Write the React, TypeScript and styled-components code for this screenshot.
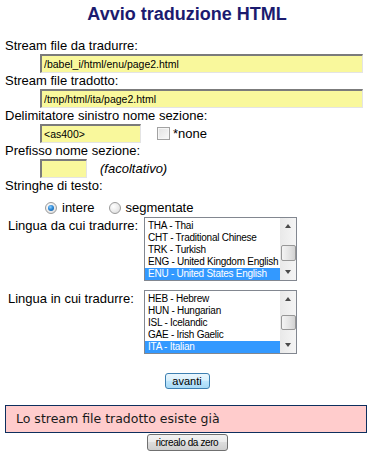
import styled, { createGlobalStyle } from 'styled-components';

const GlobalStyle = createGlobalStyle`
  html, body {
    margin: 0;
    padding: 0;
    background: #ffffff;
  }
  body {
    font-family: "Liberation Sans", Arial, sans-serif;
    font-size: 13px;
    color: #000000;
  }
`;

const Page = styled.div`
  width: 374px;
  box-sizing: border-box;
  padding: 4px 5px 0 5px;
  display: flex;
  flex-direction: column;
`;

const Title = styled.h1`
  margin: 0 0 13px;
  font-size: 18px;
  line-height: 21px;
  font-weight: bold;
  color: #1b1b6f;
  text-align: center;
`;

const Label = styled.div`
  height: 16px;
  line-height: 16px;
`;

const FieldRow = styled.div<{ $gap?: number }>`
  display: flex;
  align-items: center;
  gap: ${(p) => p.$gap ?? 0}px;
  padding-left: 35px;
`;

const TextField = styled.input<{ $width: number }>`
  width: ${(p) => p.$width}px;
  height: 19px;
  box-sizing: border-box;
  margin: 0;
  padding: 0 2px;
  background: #f9f89c;
  border-top: 2px solid #7b7b7b;
  border-left: 2px solid #7b7b7b;
  border-right: 1px solid #e4e4e4;
  border-bottom: 1px solid #e4e4e4;
  font-family: "Liberation Sans", Arial, sans-serif;
  font-size: 10.5px;
  color: #000;
  outline: none;
`;

const CheckWrap = styled.label`
  display: flex;
  align-items: center;
  gap: 3px;
`;

const CheckBox = styled.span`
  display: inline-block;
  width: 13px;
  height: 13px;
  box-sizing: border-box;
  border: 1px solid #a2a2a2;
  background: linear-gradient(135deg, #e2e2e2 0%, #f9f9f9 100%);
  box-shadow: inset 0 0 0 1px #f6f6f6;
`;

const Hint = styled.span`
  font-style: italic;
`;

const RadioRow = styled.div`
  display: flex;
  align-items: center;
  padding: 4px 0 0 40px;
  height: 19px;
`;

const RadioOption = styled.label`
  display: flex;
  align-items: center;
  gap: 5px;
  margin-right: 14px;
`;

const Radio = styled.span<{ $checked?: boolean }>`
  position: relative;
  display: inline-block;
  width: 12px;
  height: 12px;
  box-sizing: border-box;
  border-radius: 50%;
  border: 1px solid #9a9a9a;
  background: radial-gradient(circle at 35% 35%, #ffffff 0%, #e8e8e8 60%, #d4d4d4 100%);

  &::after {
    content: '';
    display: ${(p) => (p.$checked ? 'block' : 'none')};
    position: absolute;
    left: 2px;
    top: 2px;
    width: 6px;
    height: 6px;
    border-radius: 50%;
    background: radial-gradient(circle at 40% 35%, #8fd0ff 0%, #2e8ad8 45%, #0c4f94 100%);
  }
`;

const LangRow = styled.div<{ $top: number }>`
  display: flex;
  align-items: flex-start;
  margin-top: ${(p) => p.$top}px;
  padding-left: 3px;
`;

const LangLabel = styled.div`
  width: 136px;
  line-height: 15px;
  padding-top: 1px;
`;

const ListBox = styled.div`
  width: 153px;
  height: 64px;
  box-sizing: border-box;
  border: 1px solid #828790;
  background: #ffffff;
  display: flex;
`;

const Options = styled.div`
  flex: 1;
  padding-top: 2px;
  overflow: hidden;
`;

const Option = styled.div<{ $selected?: boolean }>`
  height: 12px;
  line-height: 12px;
  padding-left: 3px;
  white-space: nowrap;
  font-family: "Liberation Sans", Arial, sans-serif;
  font-size: 10px;
  letter-spacing: -0.25px;
  background: ${(p) => (p.$selected ? '#3399ff' : 'transparent')};
  color: ${(p) => (p.$selected ? '#ffffff' : '#000000')};
`;

const ScrollBar = styled.div`
  width: 16px;
  display: flex;
  flex-direction: column;
  align-items: center;
  background: linear-gradient(to right, #e9e9e9, #f5f5f5);
`;

const ArrowBtn = styled.div<{ $down?: boolean }>`
  width: 16px;
  height: 16px;
  display: flex;
  align-items: center;
  justify-content: center;
  margin-top: ${(p) => (p.$down ? 'auto' : '0')};

  &::before {
    content: '';
    width: 0;
    height: 0;
    border-left: 3.5px solid transparent;
    border-right: 3.5px solid transparent;
    ${(p) => (p.$down ? 'border-top: 4px solid #4a4a4a;' : 'border-bottom: 4px solid #4a4a4a;')}
  }
`;

const Thumb = styled.div<{ $offset: number; $size: number }>`
  width: 15px;
  height: ${(p) => p.$size}px;
  margin-top: ${(p) => p.$offset}px;
  box-sizing: border-box;
  border: 1px solid #979797;
  border-radius: 2px;
  background: linear-gradient(to right, #f4f4f4, #e2e2e2 60%, #d2d2d2);
`;

const Centered = styled.div<{ $top: number }>`
  display: flex;
  justify-content: center;
  margin-top: ${(p) => p.$top}px;
`;

const Button = styled.button<{ $variant: 'blue' | 'gray' }>`
  margin: 0;
  padding: 0;
  box-sizing: border-box;
  border-radius: 3px;
  cursor: pointer;
  color: #000;
  font-family: "Liberation Sans", Arial, sans-serif;
  ${(p) =>
    p.$variant === 'blue'
      ? `
    width: 45px;
    height: 16px;
    line-height: 13px;
    border: 1px solid #3c7fb1;
    background: linear-gradient(to bottom, #eaf6fd 0%, #d9f0fc 45%, #bee6fd 50%, #a7d9f5 100%);
    font-size: 11px;
  `
      : `
    width: 81px;
    height: 17px;
    line-height: 14px;
    border: 1px solid #707070;
    background: linear-gradient(to bottom, #f2f2f2 0%, #ebebeb 45%, #dddddd 50%, #cfcfcf 100%);
    font-size: 10px;
    letter-spacing: -0.4px;
  `}
`;

const ErrorBox = styled.div`
  width: 362px;
  height: 28px;
  box-sizing: border-box;
  margin-top: 16px;
  padding-left: 10px;
  border: 1px solid #0d2f5e;
  background: #ffcccc;
  font-family: "DejaVu Sans", Verdana, sans-serif;
  font-size: 12.5px;
  line-height: 26px;
  color: #1a1a1a;
`;

type Lang = { code: string; name: string };

const sourceLangs: Lang[] = [
  { code: 'THA', name: 'Thai' },
  { code: 'CHT', name: 'Traditional Chinese' },
  { code: 'TRK', name: 'Turkish' },
  { code: 'ENG', name: 'United Kingdom English' },
  { code: 'ENU', name: 'United States English' },
];

const targetLangs: Lang[] = [
  { code: 'HEB', name: 'Hebrew' },
  { code: 'HUN', name: 'Hungarian' },
  { code: 'ISL', name: 'Icelandic' },
  { code: 'GAE', name: 'Irish Gaelic' },
  { code: 'ITA', name: 'Italian' },
];

const LangList = ({ items, selected, thumbTop, thumbSize }: { items: Lang[]; selected: string; thumbTop: number; thumbSize: number }) => (
  <ListBox>
    <Options>
      {items.map((l) => (
        <Option key={l.code} $selected={l.code === selected}>
          {l.code} - {l.name}
        </Option>
      ))}
    </Options>
    <ScrollBar>
      <ArrowBtn />
      <Thumb $offset={thumbTop} $size={thumbSize} />
      <ArrowBtn $down />
    </ScrollBar>
  </ListBox>
);

export default function App() {
  return (
    <>
      <GlobalStyle />
      <Page>
        <Title>Avvio traduzione HTML</Title>

        <Label>Stream file da tradurre:</Label>
        <FieldRow>
          <TextField $width={323} readOnly value="/babel_i/html/enu/page2.html" />
        </FieldRow>

        <Label>Stream file tradotto:</Label>
        <FieldRow>
          <TextField $width={323} readOnly value="/tmp/html/ita/page2.html" />
        </FieldRow>

        <Label>Delimitatore sinistro nome sezione:</Label>
        <FieldRow $gap={16}>
          <TextField $width={101} readOnly value="<as400>" />
          <CheckWrap>
            <CheckBox />
            <span>*none</span>
          </CheckWrap>
        </FieldRow>

        <Label>Prefisso nome sezione:</Label>
        <FieldRow $gap={13}>
          <TextField $width={47} readOnly value="" />
          <Hint>(facoltativo)</Hint>
        </FieldRow>

        <Label>Stringhe di testo:</Label>
        <RadioRow>
          <RadioOption>
            <Radio $checked />
            <span>intere</span>
          </RadioOption>
          <RadioOption>
            <Radio />
            <span>segmentate</span>
          </RadioOption>
        </RadioRow>

        <LangRow $top={0}>
          <LangLabel>Lingua da cui tradurre:</LangLabel>
          <LangList items={sourceLangs} selected="ENU" thumbTop={11} thumbSize={16} />
        </LangRow>

        <LangRow $top={9}>
          <LangLabel>Lingua in cui tradurre:</LangLabel>
          <LangList items={targetLangs} selected="ITA" thumbTop={8} thumbSize={15} />
        </LangRow>

        <Centered $top={19}>
          <Button $variant="blue">avanti</Button>
        </Centered>

        <ErrorBox>Lo stream file tradotto esiste già</ErrorBox>

        <Centered $top={1}>
          <Button $variant="gray">ricrealo da zero</Button>
        </Centered>
      </Page>
    </>
  );
}
